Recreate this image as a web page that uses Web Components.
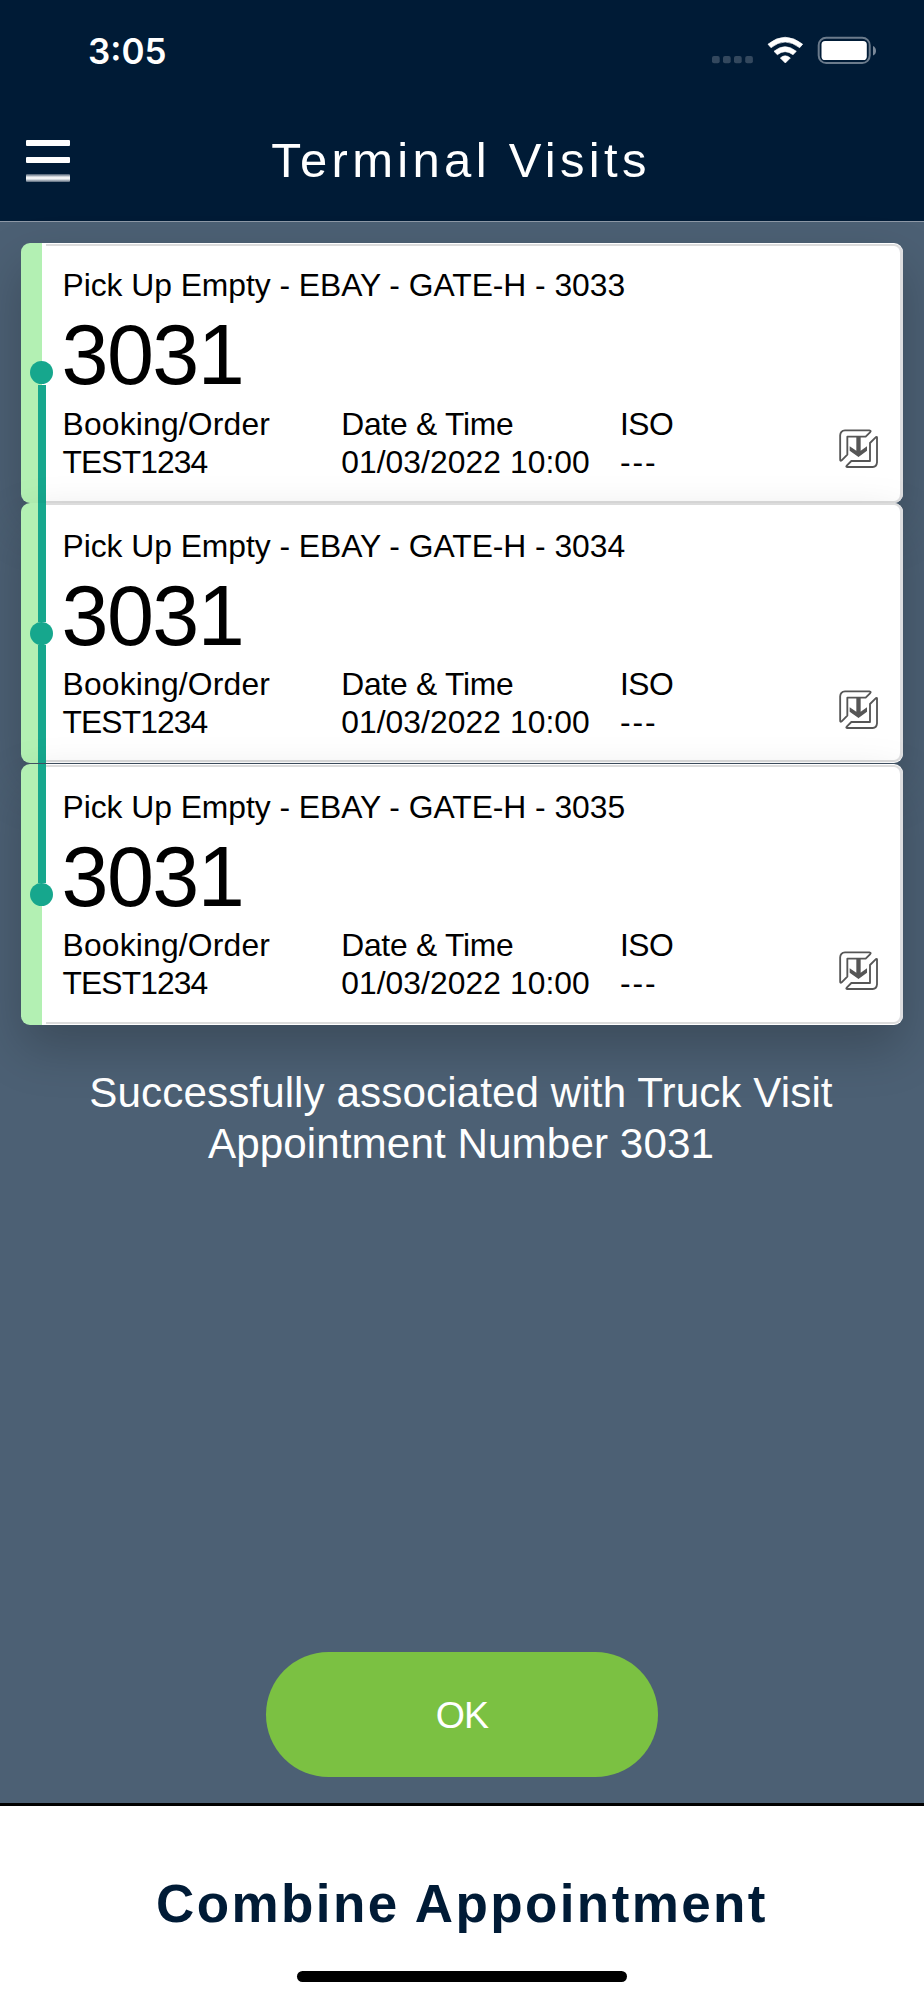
<!DOCTYPE html>
<html lang="en">
<head>
<meta charset="utf-8">
<title>Terminal Visits</title>
<style>
  html, body { margin: 0; height: 100%; }
  body { font-family: "Liberation Sans", Arial, sans-serif; }
</style>
</head>
<body>
<visits-app></visits-app>
<script>
function define(name, html) {
  const tpl = document.createElement('template');
  tpl.innerHTML = html;
  customElements.define(name, class extends HTMLElement {
    constructor() {
      super();
      this.attachShadow({ mode: 'open' }).appendChild(tpl.content.cloneNode(true));
    }
  });
}

define('status-bar', `
<style>
  :host { display: flex; height: 100px; box-sizing: border-box; padding: 0 48px 0 88px; justify-content: space-between; align-items: flex-start; color: #fff; }
  time { font: 600 35px/50px Inter, sans-serif; margin-top: 25.5px; }
  svg { display: block; }
  .icons { display: flex; margin-top: 35px; }
</style>
<time>3:05</time>
<div class="icons">
  <svg width="166" height="32" viewBox="0 0 166 32">
    <g fill="#33485e">
      <rect x="2" y="21" width="7.7" height="7.3" rx="2"/><rect x="13" y="21" width="7.7" height="7.3" rx="2"/>
      <rect x="24" y="21" width="7.7" height="7.3" rx="2"/><rect x="35.2" y="21" width="7.7" height="7.3" rx="2"/>
    </g>
    <g transform="translate(-248 -35) scale(.33333)">
      <g fill="#fff" stroke="#fff" stroke-width="2" stroke-linejoin="round">
        <path d="M918 132.500Q969 91 1022 132.500L1013 143Q969 109 927 143Z"/>
        <path d="M936 154Q969 126 1003 154L993 164Q969 146 946 164Z"/>
        <path d="M955 174Q969 161 985 174L970 189Z"/>
      </g>
    </g>
    <rect x="108.700" y="2.700" width="51" height="25.400" rx="7.500" fill="none" stroke="#6b7b8c" stroke-width="2"/>
    <rect x="111.500" y="6" width="45.300" height="19" rx="3.600" fill="#fff"/>
    <path d="M163 11v9.500q3-1.300 3-4.700t-3-4.800z" fill="#7b8999"/>
  </svg>
</div>`);

define('nav-bar', `
<style>
  :host { display: grid; grid-template-columns: 96px 1fr 98px; height: 121px; color: #fff; border-bottom: 1px solid #8d98a6; }
  .menu { display: flex; flex-direction: column; gap: 10.200px; padding: 40.300px 0 0 25.500px; }
  .menu i { width: 44px; height: 6.200px; background: #fff; border-radius: 1px; }
  .menu i:last-child { height: 8px; margin-top: .8px; background: linear-gradient(#44566b, #dfe3e7 35%, #fff 50%, #dfe3e7 65%, #56677a); }
  h1 { margin: 0; text-align: center; font-weight: 400; font-size: 49px; line-height: 60px; padding-top: 29.500px; letter-spacing: 4.300px; white-space: nowrap; }
</style>
<div class="menu"><i></i><i></i><i></i></div>
<h1><slot></slot></h1>`);

define('deliver-icon', `
<style>:host { display: block; } svg { display: block; }</style>
<svg width="39" height="39" viewBox="178 88 117 117" fill="none" stroke="#565656" stroke-width="5.500" stroke-linejoin="round">
  <path d="M196 92H269Q276 93 271 98L258 111H203V165L186 182Q181 186 181.500 178V107Q182 93 196 92Z"/>
  <path d="M288 113Q293 109 292 117V188Q291 201 279 202H204Q197 202 202 197L215 184H271V130Z"/>
  <path d="M230 112H243V153L262 140V153L236.500 172L210 153V140L230 153Z" fill="#565656" stroke="none"/>
</svg>`);

define('field-pair', `
<style>
  :host { display: block; line-height: 38px; white-space: nowrap; }
  div { height: 38px; }
  .label { letter-spacing: var(--label-spacing, 0); }
  .value { letter-spacing: var(--value-spacing, 0); }
</style>
<div class="label"><slot name="label"></slot></div><div class="value"><slot></slot></div>`);

define('visit-card', `
<style>
  :host { display: block; position: relative; height: 260.400px; box-sizing: border-box; border-radius: 9px; padding: 23.500px 25px 0 41.500px;
    background: linear-gradient(90deg, #b3f0b3 21px, #fff 21px);
    box-shadow: 0 23px 50px rgba(0,0,0,.22); color: #000; font-size: 31.800px; }
  :host(:not([first]):not([last])) { height: 260px; }
  .edge { position: absolute; inset: 1px 0 1px 25px; border: 2px solid #dcdcdc; border-right: 3px solid #dedee0; border-left: 0; border-radius: 0 9px 9px 0; }
  :host([first]) .edge { bottom: 0; }
  :host(:not([first]):not([last])) .edge { top: 0; }
  .head { line-height: 38px; height: 38px; white-space: nowrap; letter-spacing: -.03px; }
  .num { font-size: 84.500px; line-height: 84px; height: 84px; margin: 8.800px 0 7.600px -1px; letter-spacing: -1.600px; }
  .fields { display: grid; grid-template-columns: 278.700px 278.700px 1fr auto; }
  .booking { --label-spacing: .2px; --value-spacing: -.900px; }
  .date { --label-spacing: -.25px; --value-spacing: .07px; }
  .iso { --label-spacing: -.5px; --value-spacing: 2px; }
  deliver-icon { margin-top: 24.700px; }
  .dot { position: absolute; left: 9px; top: 118.300px; width: 23px; height: 23px; border-radius: 50%; background: #16a78d; }
  .up, .down { position: absolute; left: 17px; width: 8px; background: #16a78d; }
  .up { top: 0; height: 119px; }
  .down { top: 142.200px; bottom: 0; }
  :host([first]) .up, :host([last]) .down { display: none; }
</style>
<span class="edge"></span><span class="up"></span><span class="down"></span><span class="dot"></span>
<div class="head"><slot></slot></div>
<div class="num"><slot name="number"></slot></div>
<div class="fields">
  <field-pair class="booking"><span slot="label">Booking/Order</span><slot name="booking"></slot></field-pair>
  <field-pair class="date"><span slot="label">Date &amp; Time</span><slot name="date"></slot></field-pair>
  <field-pair class="iso"><span slot="label">ISO</span><slot name="iso"></slot></field-pair>
  <deliver-icon></deliver-icon>
</div>`);

define('ok-button', `
<style>
  :host { display: block; width: 392px; height: 125.600px; margin: 0 auto; }
  button { display: block; width: 100%; height: 100%; border: 0; border-radius: 63px; padding: 0; background: #7bc142; color: #fff; font: 37.500px/50px "Liberation Sans", Arial, sans-serif; letter-spacing: -.8px; }
</style>
<button><slot></slot></button>`);

define('bottom-bar', `
<style>
  :host { display: flex; flex-direction: column; align-items: center; height: 197px; box-sizing: border-box; border-top: 3px solid #000; background: #fff; color: #001b36; }
  h2 { margin: 0; font-size: 53px; line-height: 60px; padding-top: 67.500px; letter-spacing: 2.400px; white-space: nowrap; }
  i { width: 330px; height: 11px; border-radius: 6px; background: #000; margin-top: 37.500px; }
</style>
<h2><slot></slot></h2><i></i>`);

define('visits-app', `
<style>
  :host { display: flex; flex-direction: column; width: 924px; height: 2000px; background: #4c6074; overflow: hidden; }
  header { background: #001b36; position: relative; }
  main { flex: 1; display: flex; flex-direction: column; padding: 20.900px 21px 25.700px; }
  .list { display: grid; }
  visit-card[last] { margin-top: 1px; }
  p { margin: 43.500px 2px 0 0; text-align: center; color: #fff; font-size: 42.200px; line-height: 50.700px; letter-spacing: .08px; }
  ok-button { margin-top: auto; }
</style>
<header><status-bar></status-bar><nav-bar>Terminal Visits</nav-bar></header>
<main>
  <div class="list">
    <visit-card first>Pick Up Empty - EBAY - GATE-H - 3033<span slot="number">3031</span><span slot="booking">TEST1234</span><span slot="date">01/03/2022 10:00</span><span slot="iso">---</span></visit-card>
    <visit-card>Pick Up Empty - EBAY - GATE-H - 3034<span slot="number">3031</span><span slot="booking">TEST1234</span><span slot="date">01/03/2022 10:00</span><span slot="iso">---</span></visit-card>
    <visit-card last>Pick Up Empty - EBAY - GATE-H - 3035<span slot="number">3031</span><span slot="booking">TEST1234</span><span slot="date">01/03/2022 10:00</span><span slot="iso">---</span></visit-card>
  </div>
  <p>Successfully associated with Truck Visit<br>Appointment Number 3031</p>
  <ok-button>OK</ok-button>
</main>
<bottom-bar>Combine Appointment</bottom-bar>`);
</script>
</body>
</html>
